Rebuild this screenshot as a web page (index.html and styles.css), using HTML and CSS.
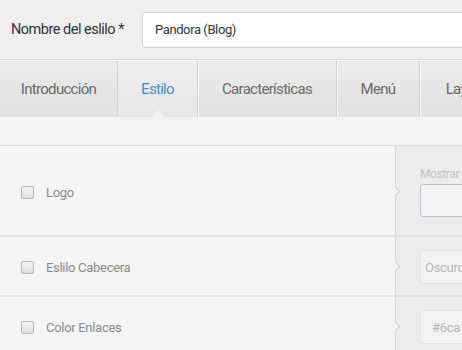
FILE: index.html
```html
<!DOCTYPE html>
<html lang="es">
<head>
    <meta charset="UTF-8">
    <title>Estilo</title>
    <link rel="stylesheet" href="styles.css">
</head>
<body>
    <div class="page">
        <div class="header">
            <label class="name-label">Nombre del eslilo *</label>
            <input class="name-input" type="text" value="Pandora (Blog)">
        </div>
        <div class="tabs">
            <div class="tab" style="width: 117px">Introducción</div>
            <div class="tab active" style="width: 79px">Estilo</div>
            <div class="tab" style="width: 138px">Características</div>
            <div class="tab" style="width: 82px">Menú</div>
            <div class="tab" style="width: 92px">Layout</div>
        </div>
        <div class="band"></div>
        <div class="row row-tall">
            <div class="option">
                <span class="check"></span>
                <span class="option-name">Logo</span>
            </div>
            <div class="setting">
                <span class="setting-label">Mostrar</span>
                <div class="field field-blue"></div>
            </div>
        </div>
        <div class="row">
            <div class="option">
                <span class="check"></span>
                <span class="option-name">Eslilo Cabecera</span>
            </div>
            <div class="setting">
                <div class="field field-select">Oscuro</div>
            </div>
        </div>
        <div class="row">
            <div class="option">
                <span class="check"></span>
                <span class="option-name">Color Enlaces</span>
            </div>
            <div class="setting">
                <div class="field">#6ca1d8</div>
            </div>
        </div>
    </div>
</body>
</html>
```

FILE: styles.css
```css
body {
    margin: 0;
    overflow: hidden;
    background-color: #f5f5f5;
    font-family: "Roboto", "Liberation Sans", sans-serif;
}
.page {
    width: 640px;
}
.header {
    height: 60px;
    display: flex;
    align-items: center;
    background-color: #efefef;
    border-bottom: 1px solid #d9d9d9;
    box-sizing: border-box;
    padding-left: 11px;
}
.name-label {
    width: 131px;
    font-size: 14.5px;
    letter-spacing: -0.5px;
    color: #333;
}
.name-input {
    width: 420px;
    height: 36px;
    box-sizing: border-box;
    border: 1px solid #d6d6d6;
    border-radius: 3px;
    background: #fff;
    padding: 0 12px;
    font-family: inherit;
    font-size: 13px;
    letter-spacing: -0.4px;
    color: #333;
    outline: none;
}
.tabs {
    height: 57px;
    display: flex;
    background: linear-gradient(#ebebeb, #e1e1e1);
    border-top: 1px solid #f7f7f7;
    box-sizing: border-box;
}
.tab {
    display: flex;
    justify-content: center;
    align-items: center;
    font-size: 15px;
    letter-spacing: -0.7px;
    color: #6a6a6a;
    border-right: 1px solid #d2d2d2;
    box-shadow: 1px 0 0 #f6f6f6;
    position: relative;
    flex-shrink: 0;
}
.tab.active {
    color: #3b8ed8;
    background: linear-gradient(#eeeeee, #e6e6e6);
}
.tab.active::after {
    content: "";
    position: absolute;
    bottom: 0;
    left: 50%;
    margin-left: -7px;
    border-left: 7px solid transparent;
    border-right: 7px solid transparent;
    border-bottom: 7px solid #f2f2f2;
}
.band {
    height: 28px;
    background-color: #f2f2f2;
    border-bottom: 1px solid #dedede;
}
.row {
    height: 60px;
    display: grid;
    grid-template-columns: 395px 1fr;
    border-bottom: 2px solid #e2e2e2;
    box-sizing: border-box;
}
.row-tall {
    height: 91px;
}
.option {
    display: flex;
    align-items: center;
    padding-left: 21px;
    padding-top: 3px;
    background-color: #f5f5f5;
}
.check {
    width: 11px;
    height: 11px;
    border: 1px solid #b9b9b9;
    border-radius: 2px;
    background: linear-gradient(#f4f4f4, #dedede);
    margin-right: 12px;
}
.option-name {
    font-size: 13px;
    letter-spacing: -0.3px;
    color: #8a8a8a;
}
.setting {
    position: relative;
    background-color: #ececec;
    border-left: 1px solid #d8d8d8;
    display: flex;
    flex-direction: column;
    justify-content: center;
    padding-left: 24px;
    padding-top: 2px;
}
.setting::before {
    content: "";
    position: absolute;
    left: -4px;
    top: 50%;
    width: 6px;
    height: 6px;
    margin-top: -3px;
    background-color: #f5f5f5;
    border-top: 1px solid #cfcfcf;
    border-right: 1px solid #cfcfcf;
    transform: rotate(45deg);
}
.setting-label {
    font-size: 12px;
    letter-spacing: -0.4px;
    color: #c4c4c4;
    margin-bottom: 3px;
}
.field {
    width: 120px;
    height: 34px;
    box-sizing: border-box;
    border: 1px solid #e2e2e2;
    border-radius: 3px;
    background-color: #f2f2f2;
    padding-left: 11px;
    display: flex;
    align-items: center;
    font-size: 13px;
    letter-spacing: -0.3px;
    color: #b9b9b9;
}
.field-select {
    padding-left: 4px;
}
.field-blue {
    height: 33px;
    border-color: #b7c3d3;
}
```
